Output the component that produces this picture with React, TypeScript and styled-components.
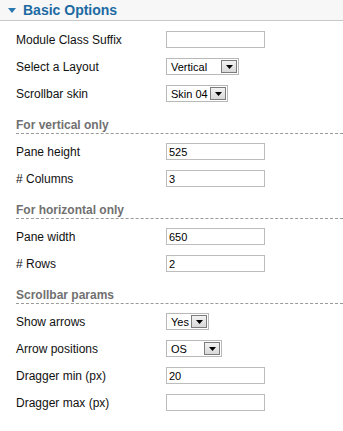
import styled, {createGlobalStyle} from "styled-components";

type FieldType =
    | {kind: 'text', label: string, value: string}
    | {kind: 'select', label: string, value: string, width: number}

type SectionType = {
    title?: string
    fields: FieldType[]
}

const sections: SectionType[] = [
    {
        fields: [
            {kind: 'text', label: 'Module Class Suffix', value: ''},
            {kind: 'select', label: 'Select a Layout', value: 'Vertical', width: 73},
            {kind: 'select', label: 'Scrollbar skin', value: 'Skin 04', width: 62},
        ]
    },
    {
        title: 'For vertical only',
        fields: [
            {kind: 'text', label: 'Pane height', value: '525'},
            {kind: 'text', label: '# Columns', value: '3'},
        ]
    },
    {
        title: 'For horizontal only',
        fields: [
            {kind: 'text', label: 'Pane width', value: '650'},
            {kind: 'text', label: '# Rows', value: '2'},
        ]
    },
    {
        title: 'Scrollbar params',
        fields: [
            {kind: 'select', label: 'Show arrows', value: 'Yes', width: 43},
            {kind: 'select', label: 'Arrow positions', value: 'OS', width: 56},
            {kind: 'text', label: 'Dragger min (px)', value: '20'},
            {kind: 'text', label: 'Dragger max (px)', value: ''},
        ]
    },
]

const Dropdown = (props: {value: string, width: number}) => {
    return (
        <SelectBox $width={props.width}>
            <span>{props.value}</span>
            <SelectButton>
                <svg width="7" height="4" viewBox="0 0 7 4">
                    <path d="M0 0H7L3.5 4Z" fill="#000"/>
                </svg>
            </SelectButton>
        </SelectBox>
    )
}

export default function App() {
    return (
        <>
            <GlobalStyle/>
            <Panel>
                <Header>
                    <svg width="8" height="5" viewBox="0 0 8 5">
                        <path d="M0 0H8L4 5Z" fill="#2a78b0"/>
                    </svg>
                    <Title>Basic Options</Title>
                </Header>
                <Body>
                    {sections.map((section, i) => (
                        <div key={i}>
                            {section.title && <SectionTitle>{section.title}</SectionTitle>}
                            {section.fields.map(field => (
                                <Row key={field.label}>
                                    <Label>{field.label}</Label>
                                    {field.kind === 'text'
                                        ? <TextInput type="text" defaultValue={field.value}/>
                                        : <Dropdown value={field.value} width={field.width}/>}
                                </Row>
                            ))}
                        </div>
                    ))}
                </Body>
            </Panel>
        </>
    )
}

const GlobalStyle = createGlobalStyle`
    body {
        margin: 0;
        background: #fff;
        font-family: "Liberation Sans", Arial, sans-serif;
    }
`

const Panel = styled.div`
    width: 343px;
    height: 431px;
    background: #fff;
    overflow: hidden;
`

const Header = styled.div`
    height: 20px;
    display: flex;
    align-items: center;
    gap: 7px;
    padding-left: 8px;
    background: #f7f7f7;
    border-bottom: 1px solid #c8c8c8;
`

const Title = styled.h3`
    margin: 0;
    font-size: 14px;
    font-weight: bold;
    color: #1d6aa3;
    line-height: 20px;
`

const Body = styled.div`
    padding: 5px 0 0 16px;
`

const SectionTitle = styled.div`
    height: 14px;
    padding: 11px 0 1px;
    margin-bottom: 4px;
    border-bottom: 1px dashed #9a9a9a;
    font-size: 12px;
    line-height: 14px;
    font-weight: bold;
    color: #707070;
`

const Row = styled.div`
    height: 27px;
    display: grid;
    grid-template-columns: 150px auto;
    align-items: center;
`

const Label = styled.label`
    font-size: 12px;
    color: #111;
`

const TextInput = styled.input`
    box-sizing: border-box;
    width: 99px;
    height: 17px;
    margin: 0;
    padding: 0 2px;
    border: 1px solid #bcbcbc;
    font-family: inherit;
    font-size: 11px;
    color: #000;
    outline: none;
`

const SelectBox = styled.div<{$width: number}>`
    box-sizing: border-box;
    width: ${props => props.$width}px;
    height: 17px;
    display: flex;
    align-items: center;
    justify-content: space-between;
    padding: 0 1px 0 4px;
    border: 1px solid #b8b8b8;
    background: #fff;
    font-size: 11px;
    color: #000;
`

const SelectButton = styled.span`
    box-sizing: border-box;
    width: 16px;
    height: 13px;
    display: flex;
    align-items: flex-end;
    justify-content: center;
    padding-bottom: 3px;
    border: 1px solid #7c7c7c;
    background: linear-gradient(#f2f2f2, #d9d9d9);
`
